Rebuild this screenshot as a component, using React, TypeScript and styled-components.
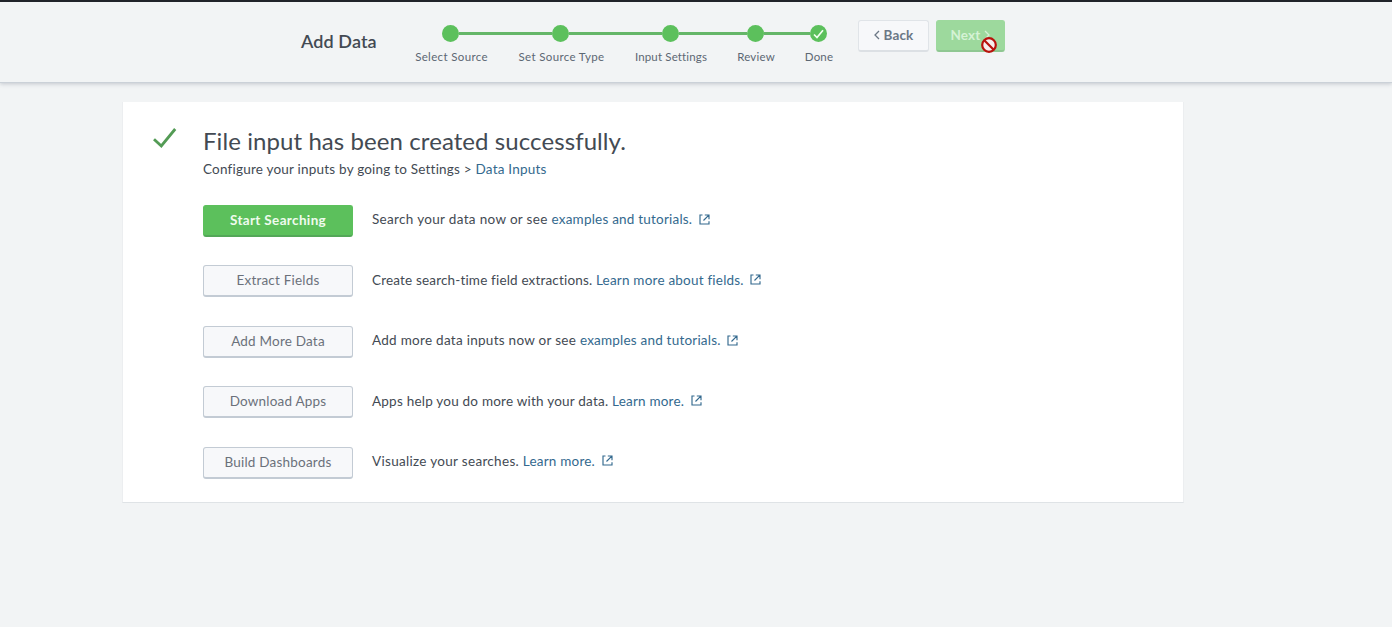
import React from "react";
import styled, { createGlobalStyle } from "styled-components";

const GlobalStyle = createGlobalStyle`
  * { box-sizing: border-box; }
  body {
    margin: 0;
    background: #f2f4f5;
    color: #434a53;
    font-family: Lato, "Open Sans", sans-serif;
    font-size: 14px;
  }
`;

const Page = styled.div`
  min-height: 627px;
  overflow: hidden;
`;

const Header = styled.header`
  display: flex;
  align-items: flex-start;
  height: 83px;
  padding-left: 301px;
  background: #f2f4f5;
  border-top: 2px solid #20232a;
  border-bottom: 1px solid #cbd1d8;
  box-shadow: 0 1px 4px rgba(60, 68, 90, 0.25);
`;

const PageTitle = styled.h1`
  width: 114px;
  margin: 28px 0 0;
  font-size: 18px;
  line-height: 22px;
  font-weight: 600;
  letter-spacing: 0.1px;
  white-space: nowrap;
`;

const Steps = styled.ol`
  display: flex;
  gap: 30px;
  margin: 23px 25px 0 0;
  padding: 0;
  list-style: none;
`;

const Step = styled.li<{ $width: number }>`
  width: ${(p) => p.$width}px;
`;

const MarkerRow = styled.div`
  display: flex;
  align-items: center;
  margin: 0 -14px 0 -16px;
`;

const Rail = styled.span<{ $hidden?: boolean }>`
  flex: 1;
  height: 3px;
  background: ${(p) => (p.$hidden ? "transparent" : "#65b668")};
`;

const Marker = styled.span`
  display: flex;
  align-items: center;
  justify-content: center;
  width: 17px;
  height: 17px;
  border-radius: 50%;
  background: #5cc05c;
`;

const StepLabel = styled.div<{ $spacing: number }>`
  display: flex;
  justify-content: center;
  margin-top: 7px;
  font-size: 11.5px;
  line-height: 15px;
  letter-spacing: ${(p) => p.$spacing}px;
  color: #5c6773;
  white-space: nowrap;
`;

const NavButton = styled.button<{ $primary?: boolean }>`
  display: flex;
  align-items: center;
  justify-content: center;
  gap: 4px;
  width: ${(p) => (p.$primary ? 69 : 71)}px;
  height: 32px;
  margin: 18px 7px 0 0;
  padding: 0 0 1px;
  border: 1px solid ${(p) => (p.$primary ? "#9dd99d" : "#e0e4e8")};
  border-bottom: ${(p) => (p.$primary ? "2px solid #8fc792" : "2px solid #dce0e4")};
  border-radius: 3px;
  background: ${(p) => (p.$primary ? "#9dd99d" : "#f7f8fa")};
  color: ${(p) => (p.$primary ? "#d5f2d5" : "#6b7785")};
  font: 700 13.5px/18px Lato, sans-serif;
  letter-spacing: 0.15px;
  position: relative;
`;

const BlockedCursor = styled.svg`
  position: absolute;
  left: 43px;
  top: 15px;
`;

const Card = styled.main`
  display: flex;
  width: 1062px;
  height: 401px;
  margin: 19px 0 0 122px;
  padding: 24px 0 0 30px;
  background: #fff;
  border: 1px solid #eceef0;
  border-top: 0;
  border-bottom-color: #dfe3e6;
`;

const CheckSlot = styled.div`
  width: 50px;
  padding-top: 1px;
`;

const Heading = styled.h2`
  margin: 0;
  font-size: 24px;
  line-height: 30px;
  font-weight: 400;
  letter-spacing: 0.08px;
  white-space: nowrap;
`;

const Hint = styled.p`
  margin: 4px 0 27px;
  font-size: 13.5px;
  line-height: 18px;
  letter-spacing: 0.21px;
`;

const Link = styled.a`
  color: #33698e;
  text-decoration: none;
`;

const Action = styled.div`
  display: flex;
  align-items: flex-start;
  height: 32px;
  margin-bottom: 28.4px;
`;

const ActionButton = styled.button<{ $primary?: boolean }>`
  width: 150px;
  height: 32px;
  margin: 0 19px 0 0;
  padding: 0 0 1.1px;
  border: 1px solid ${(p) => (p.$primary ? "#5cc05c" : "#c3cbd4")};
  border-bottom: ${(p) => (p.$primary ? "2px solid #53a758" : "2px solid #c3cbd4")};
  border-radius: 3px;
  background: ${(p) => (p.$primary ? "#5cc05c" : "#f7f8fa")};
  color: ${(p) => (p.$primary ? "#effbee" : "#6b717a")};
  font-family: Lato, sans-serif;
  font-weight: ${(p) => (p.$primary ? 700 : 400)};
  font-size: 13.5px;
  letter-spacing: ${(p) => (p.$primary ? 0.35 : 0.2)}px;
`;

const ActionText = styled.div<{ $spacing: number }>`
  display: flex;
  align-items: center;
  height: 28.8px;
  font-size: 13.5px;
  letter-spacing: ${(p) => p.$spacing}px;
  white-space: pre;

  ${Link} {
    letter-spacing: 0.21px;
  }
`;

const ExternalSvg = styled.svg`
  margin-left: 6.5px;
  color: #33698e;
`;

const ExternalIcon = () => (
  <ExternalSvg width="11" height="11" viewBox="0 0 11 11" fill="none" stroke="currentColor" strokeWidth="1.15">
    <path d="M3.5 1H1v9h9V7.2M5.8 1H10v4.2M9.8 1.2L4.5 6.5" />
  </ExternalSvg>
);

const steps = [
  { label: "Select Source", width: 73, spacing: 0.35 },
  { label: "Set Source Type", width: 87, spacing: 0.35 },
  { label: "Input Settings", width: 72, spacing: 0.15 },
  { label: "Review", width: 38, spacing: 0.2 },
  { label: "Done", width: 28, spacing: 0.2 },
];

const actions = [
  { button: "Start Searching", text: "Search your data now or see ", link: "examples and tutorials.", spacing: 0.33 },
  { button: "Extract Fields", text: "Create search-time field extractions. ", link: "Learn more about fields.", spacing: 0.17 },
  { button: "Add More Data", text: "Add more data inputs now or see ", link: "examples and tutorials.", spacing: 0.28 },
  { button: "Download Apps", text: "Apps help you do more with your data. ", link: "Learn more.", spacing: 0.22 },
  { button: "Build Dashboards", text: "Visualize your searches. ", link: "Learn more.", spacing: 0.31 },
];

export default function App() {
  return (
    <Page>
      <GlobalStyle />
      <Header>
        <PageTitle>Add Data</PageTitle>
        <Steps>
          {steps.map((s, i) => (
            <Step key={s.label} $width={s.width}>
              <MarkerRow>
                <Rail $hidden={i === 0} />
                <Marker>
                  {i === steps.length - 1 && (
                    <svg width="11" height="10" viewBox="0 0 11 10" fill="none" stroke="#f4fff2" strokeWidth="1.7">
                      <path d="M1 5.5L4 8.5L10 1.2" />
                    </svg>
                  )}
                </Marker>
                <Rail $hidden={i === steps.length - 1} />
              </MarkerRow>
              <StepLabel $spacing={s.spacing}>{s.label}</StepLabel>
            </Step>
          ))}
        </Steps>
        <NavButton>
          <svg width="6" height="10" viewBox="0 0 6 10" fill="none" stroke="currentColor" strokeWidth="1.3">
            <path d="M5 1L1 5L5 9" />
          </svg>
          Back
        </NavButton>
        <NavButton $primary>
          Next
          <svg width="6" height="10" viewBox="0 0 6 10" fill="none" stroke="currentColor" strokeWidth="1.3">
            <path d="M1 1L5 5L1 9" />
          </svg>
          <BlockedCursor width="18" height="18" viewBox="0 0 18 18">
            <circle cx="9" cy="9" r="6.8" fill="#f7eeee" stroke="#b8120c" strokeWidth="2.2" />
            <path d="M4.5 4.5L13.5 13.5" stroke="#b8120c" strokeWidth="2.2" />
          </BlockedCursor>
        </NavButton>
      </Header>
      <Card>
        <CheckSlot>
          <svg width="24" height="22" viewBox="0 0 24 22" fill="none" stroke="#539b55" strokeWidth="2.8">
            <path d="M1 12.2L8.3 19L22.2 2" />
          </svg>
        </CheckSlot>
        <div>
          <Heading>File input has been created successfully.</Heading>
          <Hint>
            Configure your inputs by going to Settings &gt; <Link>Data Inputs</Link>
          </Hint>
          {actions.map((a, i) => (
            <Action key={a.button}>
              <ActionButton $primary={i === 0}>{a.button}</ActionButton>
              <ActionText $spacing={a.spacing}>
                {a.text}
                <Link>{a.link}</Link>
                <ExternalIcon />
              </ActionText>
            </Action>
          ))}
        </div>
      </Card>
    </Page>
  );
}
